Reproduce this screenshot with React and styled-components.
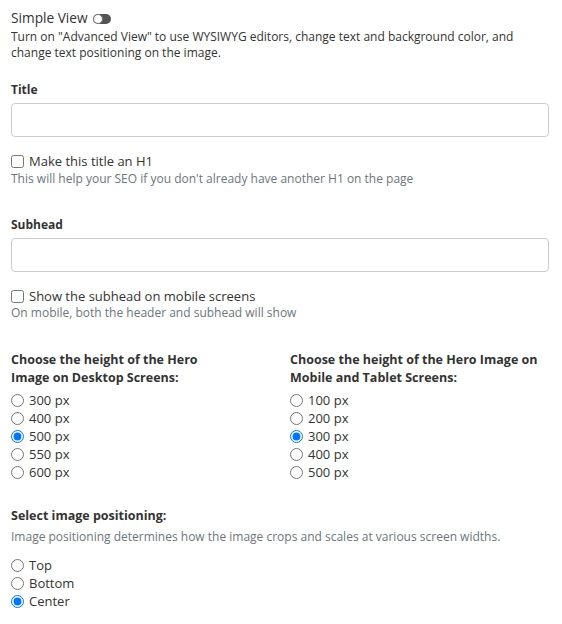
import React from "react";
import styled, { createGlobalStyle } from "styled-components";

const GlobalStyle = createGlobalStyle`
  body {
    margin: 0;
    background: #fff;
    font-family: "Open Sans", "Liberation Sans", sans-serif;
    color: #333;
  }
`;

const Page = styled.div`
  padding: 9px 13px 0 11px;
  width: 538px;
`;

const ViewRow = styled.div`
  display: flex;
  align-items: center;
  gap: 5px;
  font-size: 13.7px;
  line-height: 18px;
`;

const Toggle = styled.span`
  display: inline-block;
  position: relative;
  width: 18px;
  height: 10px;
  border-radius: 5px;
  background: #555;
  margin-top: 1px;

  &::before {
    content: "";
    position: absolute;
    left: 0;
    top: 0;
    width: 8px;
    height: 8px;
    border-radius: 50%;
    background: #fff;
    border: 1px solid #777;
  }
`;

const Intro = styled.p`
  margin: 2px 0 0;
  font-size: 12px;
  line-height: 16px;
  color: #333;
`;

const FieldLabel = styled.div`
  margin-top: ${(p) => p.$top || 21}px;
  font-size: 12px;
  line-height: 16px;
  font-weight: 700;
  color: #333;
`;

const TextBox = styled.input`
  display: block;
  box-sizing: border-box;
  width: 100%;
  height: 34px;
  margin-top: 5px;
  border: 1px solid #ccc;
  border-radius: 4px;
  background: #fff;
  outline: none;
`;

const CheckRow = styled.label`
  display: flex;
  align-items: center;
  gap: 5px;
  margin-top: 15px;
  font-size: 13px;
  line-height: 18px;
  color: #333;

  input {
    margin: 0;
    width: 13px;
    height: 13px;
  }
`;

const Help = styled.div`
  margin-top: ${(p) => p.$top || 0}px;
  font-size: 12px;
  line-height: 16px;
  color: #6c757d;
`;

const Columns = styled.div`
  display: grid;
  grid-template-columns: 205px 1fr;
  column-gap: 74px;
  margin-top: 30px;
`;

const GroupTitle = styled.div`
  margin-top: ${(p) => p.$top || 0}px;
  font-size: 12.5px;
  line-height: 18px;
  font-weight: 700;
  color: #333;
`;

const RadioList = styled.div`
  display: flex;
  flex-direction: column;
  margin-top: ${(p) => p.$top || 4}px;
`;

const RadioRow = styled.label`
  display: flex;
  align-items: center;
  gap: 5px;
  font-size: 13px;
  line-height: 18px;
  color: #333;

  input {
    margin: 0;
    width: 13px;
    height: 13px;
  }
`;

const RadioGroup = ({ name, options, value, top }) => (
  <RadioList $top={top}>
    {options.map((o) => (
      <RadioRow key={o}>
        <input type="radio" name={name} defaultChecked={o === value} />
        {o}
      </RadioRow>
    ))}
  </RadioList>
);

export default function App() {
  return (
    <Page>
      <GlobalStyle />
      <ViewRow>
        Simple View <Toggle />
      </ViewRow>
      <Intro>
        Turn on "Advanced View" to use WYSIWYG editors, change text and background color, and
        change text positioning on the image.
      </Intro>

      <FieldLabel>Title</FieldLabel>
      <TextBox type="text" />
      <CheckRow>
        <input type="checkbox" />
        Make this title an H1
      </CheckRow>
      <Help $top={1}>This will help your SEO if you don't already have another H1 on the page</Help>

      <FieldLabel $top={30}>Subhead</FieldLabel>
      <TextBox type="text" />
      <CheckRow>
        <input type="checkbox" />
        Show the subhead on mobile screens
      </CheckRow>
      <Help>On mobile, both the header and subhead will show</Help>

      <Columns>
        <div>
          <GroupTitle>Choose the height of the Hero Image on Desktop Screens:</GroupTitle>
          <RadioGroup
            name="desktop"
            options={["300 px", "400 px", "500 px", "550 px", "600 px"]}
            value="500 px"
          />
        </div>
        <div>
          <GroupTitle>Choose the height of the Hero Image on Mobile and Tablet Screens:</GroupTitle>
          <RadioGroup
            name="mobile"
            options={["100 px", "200 px", "300 px", "400 px", "500 px"]}
            value="300 px"
          />
        </div>
      </Columns>

      <GroupTitle $top={26}>Select image positioning:</GroupTitle>
      <Help $top={4}>Image positioning determines how the image crops and scales at various screen widths.</Help>
      <RadioGroup name="position" options={["Top", "Bottom", "Center"]} value="Center" top={11} />
    </Page>
  );
}
